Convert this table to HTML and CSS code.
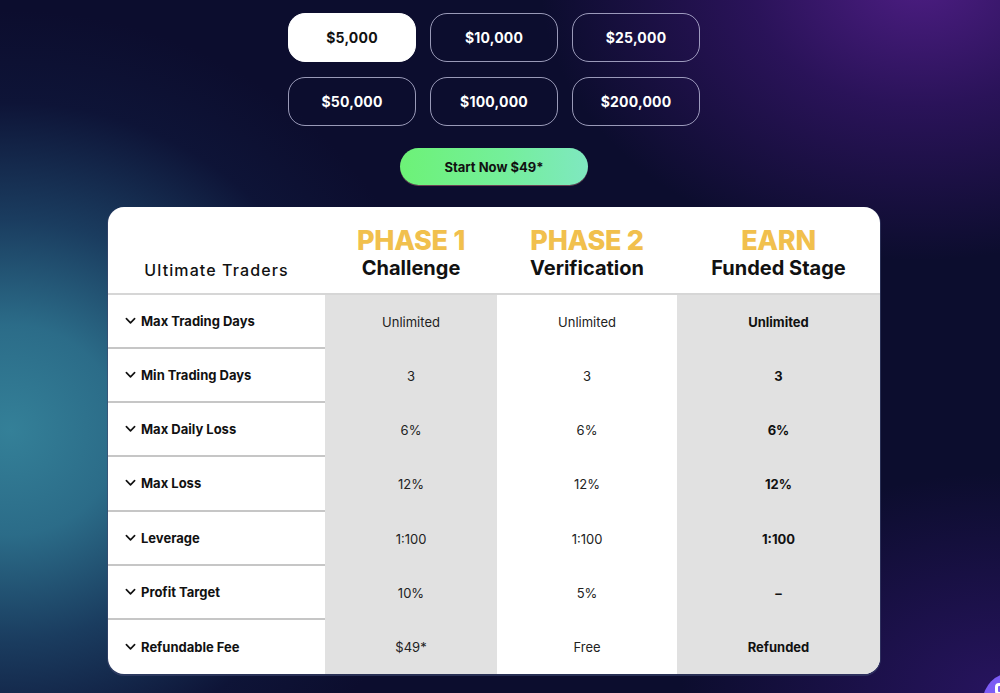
FILE: index.html
```html
<!DOCTYPE html>
<html>
<head>
<meta charset="utf-8">
<link rel="stylesheet" href="styles.css">
</head>
<body>
<div class="bg">
  <main class="wrap">
    <div class="amounts">
      <button class="amt active">$5,000</button>
      <button class="amt">$10,000</button>
      <button class="amt">$25,000</button>
      <button class="amt">$50,000</button>
      <button class="amt">$100,000</button>
      <button class="amt">$200,000</button>
    </div>
    <button class="start">Start Now $49*</button>
    <div class="table">
      <div class="hcell label-head">Ultimate Traders</div>
      <div class="hcell"><span class="phase">PHASE 1</span><span class="stage">Challenge</span></div>
      <div class="hcell"><span class="phase">PHASE 2</span><span class="stage">Verification</span></div>
      <div class="hcell"><span class="phase">EARN</span><span class="stage">Funded Stage</span></div>

      <div class="lab"><svg class="chev" viewBox="0 0 12 8"><path d="M1.5 1.5 6 6l4.5-4.5"/></svg>Max Trading Days</div>
      <div class="val gray">Unlimited</div><div class="val">Unlimited</div><div class="val gray bold">Unlimited</div>

      <div class="lab"><svg class="chev" viewBox="0 0 12 8"><path d="M1.5 1.5 6 6l4.5-4.5"/></svg>Min Trading Days</div>
      <div class="val gray">3</div><div class="val">3</div><div class="val gray bold">3</div>

      <div class="lab"><svg class="chev" viewBox="0 0 12 8"><path d="M1.5 1.5 6 6l4.5-4.5"/></svg>Max Daily Loss</div>
      <div class="val gray">6%</div><div class="val">6%</div><div class="val gray bold">6%</div>

      <div class="lab"><svg class="chev" viewBox="0 0 12 8"><path d="M1.5 1.5 6 6l4.5-4.5"/></svg>Max Loss</div>
      <div class="val gray">12%</div><div class="val">12%</div><div class="val gray bold">12%</div>

      <div class="lab"><svg class="chev" viewBox="0 0 12 8"><path d="M1.5 1.5 6 6l4.5-4.5"/></svg>Leverage</div>
      <div class="val gray">1:100</div><div class="val">1:100</div><div class="val gray bold">1:100</div>

      <div class="lab"><svg class="chev" viewBox="0 0 12 8"><path d="M1.5 1.5 6 6l4.5-4.5"/></svg>Profit Target</div>
      <div class="val gray">10%</div><div class="val">5%</div><div class="val gray bold">–</div>

      <div class="lab last"><svg class="chev" viewBox="0 0 12 8"><path d="M1.5 1.5 6 6l4.5-4.5"/></svg>Refundable Fee</div>
      <div class="val gray">$49*</div><div class="val">Free</div><div class="val gray bold last-r">Refunded</div>
    </div>
  </main>
  <div class="chat"><span class="chat-icon"></span></div>
</div>
</body>
</html>
```
FILE: styles.css
```css
* { box-sizing: border-box; }
html, body { margin: 0; padding: 0; }
body {
  font-family: Inter, "Noto Sans", sans-serif;
  overflow: hidden;
}
.bg {
  position: relative;
  width: 1000px;
  height: 693px;
  overflow: hidden;
  background:
    radial-gradient(ellipse 440px 420px at 10px 430px, rgba(52,128,152,1) 0%, rgba(46,116,144,0.92) 25%, rgba(34,86,122,0.65) 50%, rgba(18,36,76,0.3) 78%, rgba(12,13,46,0) 100%),
    radial-gradient(ellipse 380px 280px at 920px -20px, rgba(80,30,135,0.95) 0%, rgba(58,22,112,0.65) 45%, rgba(12,13,46,0) 100%),
    radial-gradient(ellipse 320px 220px at 1000px 693px, rgba(48,22,110,0.75) 0%, rgba(12,13,46,0) 100%),
    #0c0d2e;
}
.wrap {
  width: 772px;
  margin-left: 108px;
  padding-top: 13px;
  display: flex;
  flex-direction: column;
  align-items: center;
}
.amounts {
  display: grid;
  grid-template-columns: repeat(3, 128px);
  column-gap: 14px;
  row-gap: 15px;
}
.amt {
  height: 49px;
  border-radius: 17px;
  border: 1px solid rgba(200,200,230,0.75);
  background: transparent;
  color: #fff;
  font-family: inherit;
  font-weight: 700;
  font-size: 14px;
  letter-spacing: 0.2px;
  padding: 0;
}
.amt.active {
  background: #fff;
  border-color: #fff;
  color: #111;
}
.start {
  margin-top: 22px;
  width: 188px;
  height: 37px;
  border-radius: 19px;
  border: none;
  background: linear-gradient(90deg, #6df277 0%, #74ef9a 55%, #7fe8c0 100%);
  color: #111;
  font-family: inherit;
  font-weight: 700;
  font-size: 13px;
  padding: 0;
  box-shadow: 0 1px 0 rgba(200,120,120,0.5);
}
.table {
  margin-top: 22px;
  width: 772px;
  display: grid;
  grid-template-columns: 217px 172px 180px 203px;
  grid-template-rows: 88px repeat(7, 54.15px);
  background: #fff;
  border-radius: 16px;
  overflow: hidden;
  box-shadow: 0 1px 0 1px rgba(60,70,110,0.6);
}
.hcell {
  display: flex;
  flex-direction: column;
  align-items: center;
  justify-content: flex-end;
  padding-bottom: 12px;
  border-bottom: 2px solid #d6d6d6;
}
.label-head {
  font-size: 16px;
  font-weight: 500;
  letter-spacing: 1.1px;
  color: #111;
  padding-bottom: 13px;
}
.phase {
  color: #f1c04d;
  font-size: 27px;
  font-weight: 800;
  line-height: 29px;
  letter-spacing: -0.3px;
}
.stage {
  color: #111;
  font-size: 20px;
  font-weight: 700;
  line-height: 26px;
}
.lab {
  display: flex;
  align-items: center;
  padding-left: 17px;
  font-size: 13px;
  font-weight: 700;
  color: #111;
  border-bottom: 2px solid #c6c6c6;
}
.lab.last { border-bottom: none; }
.chev {
  width: 11px;
  height: 8px;
  margin-right: 5px;
  fill: none;
  stroke: #111;
  stroke-width: 1.8;
  stroke-linecap: round;
  stroke-linejoin: round;
}
.val {
  display: flex;
  align-items: center;
  justify-content: center;
  font-size: 13px;
  color: #222;
}
.gray { background: #e1e1e1; }
.bold { font-weight: 700; color: #111; }
.chat {
  position: absolute;
  left: 983px;
  top: 673px;
  width: 56px;
  height: 56px;
  border-radius: 50%;
  background: #7c5cf4;
}
.chat-icon {
  position: absolute;
  left: 12px;
  top: 10px;
  width: 10px;
  height: 12px;
  border: 3px solid #fff;
  border-radius: 4px;
}
```
